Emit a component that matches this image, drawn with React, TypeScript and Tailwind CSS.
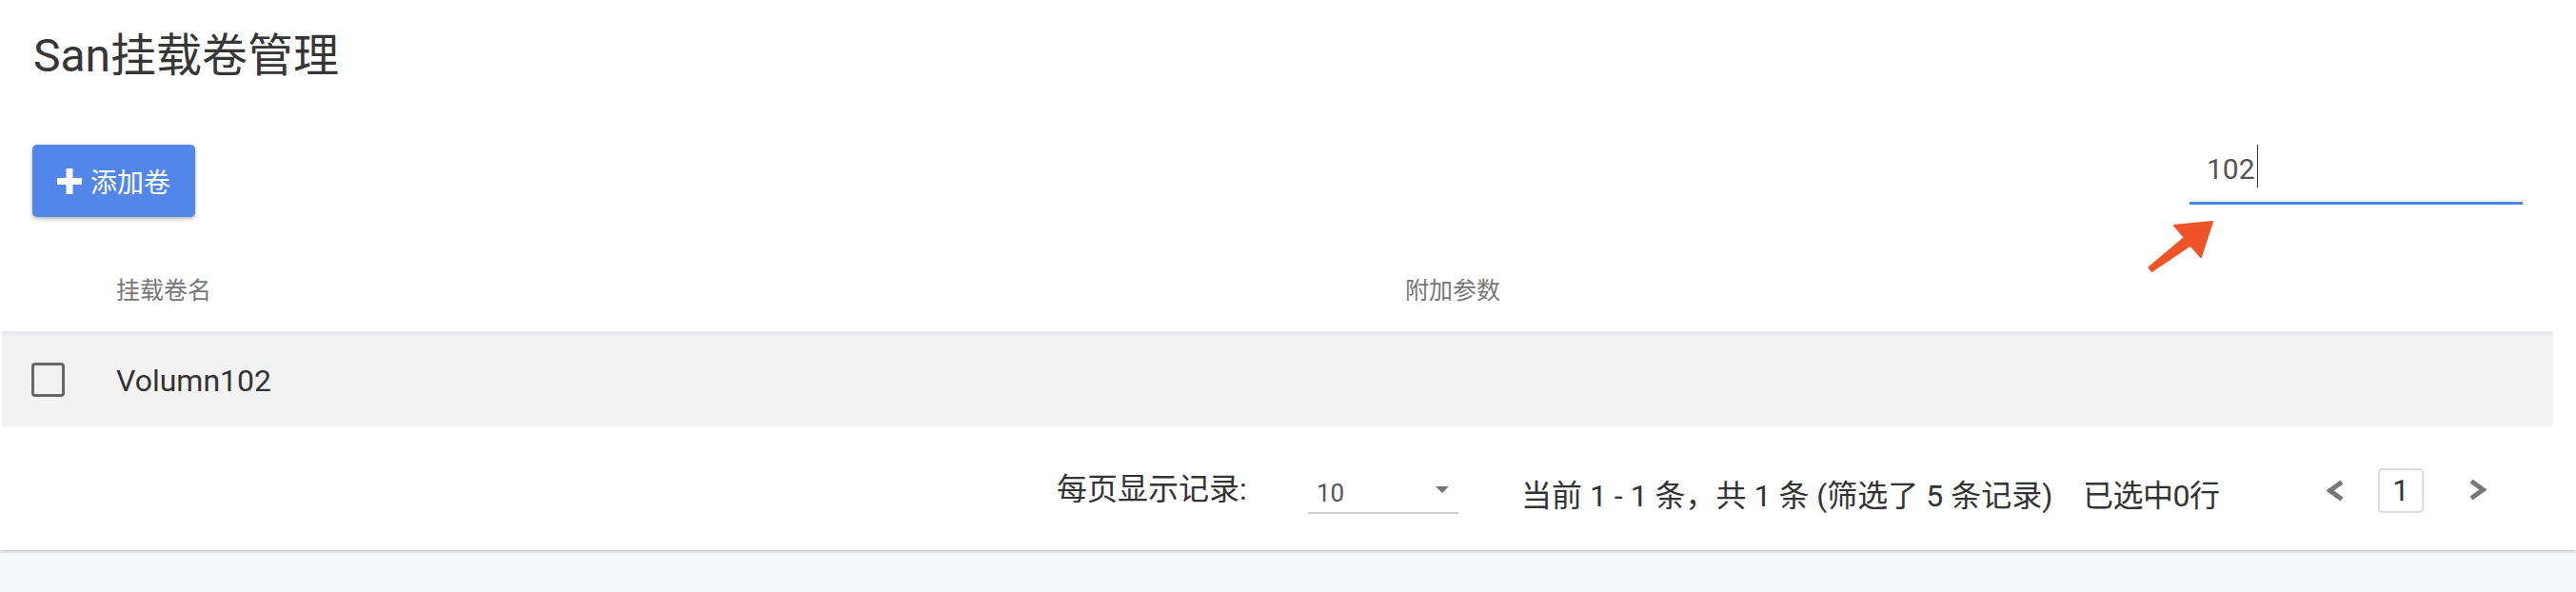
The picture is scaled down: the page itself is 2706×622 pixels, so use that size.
import React from "react";

function PlusIcon() {
  return (
    <svg width="26" height="27" viewBox="0 0 26 27" className="block">
      <rect x="9.5" y="0" width="7" height="27" fill="#fff" />
      <rect x="0" y="10" width="26" height="7" fill="#fff" />
    </svg>
  );
}

function Chevron({ dir }: { dir: "left" | "right" }) {
  const pts = dir === "left" ? "16,2.5 3.5,11.5 16,20.5" : "3,2.5 15.5,11.5 3,20.5";
  return (
    <svg width="19" height="23" viewBox="0 0 19 23" className="block">
      <polyline points={pts} fill="none" stroke="#777" strokeWidth="5" strokeLinejoin="miter" />
    </svg>
  );
}

function Arrow() {
  return (
    <svg
      width="80"
      height="65"
      viewBox="0 0 80 65"
      className="absolute left-[2250px] top-[225px]"
    >
      <polygon
        points="74,8 34,12 45,24.5 7.5,56 10.5,60 51,32.5 62,45"
        fill="#ee5428"
        stroke="#ee5428"
        strokeWidth="2"
        strokeLinejoin="round"
      />
    </svg>
  );
}

export default function App() {
  return (
    <div className="w-[2706px] h-[622px] bg-[#f7f8fa] font-[Roboto,'Noto_Sans_CJK_SC',sans-serif] overflow-hidden">
      <div className="relative bg-white h-[578px] shadow-[0_1px_4px_rgba(0,0,0,0.28)]">
        <h1 className="pt-[31px] pl-[35px] text-[48px] leading-[56px] text-[#363636] font-normal">
          San挂载卷管理
        </h1>

        <div className="flex justify-between mt-[65px] h-[76px]">
          <button className="ml-[34px] w-[171px] h-[76px] bg-[#5286e9] rounded-[5px] shadow-[0_2px_4px_rgba(0,0,0,0.3)] flex items-center pl-[26px] gap-[9px]">
            <PlusIcon />
            <span className="pt-[5px] text-[28px] leading-[33px] text-white">添加卷</span>
          </button>

          <div className="mr-[56px] w-[350px] h-[63px] border-b-[3px] border-[#5286e6] flex items-start pl-[18px]">
            <span className="mt-[8px] text-[30px] leading-[36px] text-[#555]">102</span>
            <span className="ml-[2px] w-px h-[45px] bg-[#333]" />
          </div>
        </div>

        <Arrow />

        <div className="ml-[2px] w-[2680px]">
          <div className="flex h-[120px] pt-[63px] text-[25px] leading-[30px] text-[#777]">
            <div className="w-[120px]" />
            <div className="w-[1354px]">挂载卷名</div>
            <div>附加参数</div>
          </div>

          <div className="flex items-center h-[100px] border-t-4 border-[#e9eaee] bg-[#f2f2f2]">
            <div className="w-[120px] flex">
              <div className="ml-[31px] -mt-[3px] w-[35px] h-[36px] border-[3px] border-[#666] rounded-[4px]" />
            </div>
            <div className="text-[32px] text-[#333]">Volumn102</div>
          </div>
        </div>

        <div className="flex justify-end items-start pr-[94px] h-[130px] text-[32px] leading-[38px] text-[#333] whitespace-nowrap">
          <div className="mt-[47px] w-[199px]">每页显示记录:</div>
          <div className="ml-[65px] mt-[55px] w-[158px] h-[37px] border-b-2 border-[#ccc] flex justify-between pl-[9px] pr-[10px]">
            <span className="text-[26px] leading-[30px] text-[#555]">10</span>
            <span className="mt-[8px] w-0 h-0 border-l-[7px] border-r-[7px] border-t-[7px] border-l-transparent border-r-transparent border-t-[#777]" />
          </div>
          <div className="ml-[66px] mt-[54px] w-[554px]">当前 1 - 1 条，共 1 条 (筛选了 5 条记录)</div>
          <div className="ml-[36px] mt-[54px] w-[144px] tracking-[-0.5px]">已选中0行</div>
          <div className="ml-[112px] mt-[56px]">
            <Chevron dir="left" />
          </div>
          <div className="ml-[35px] mt-[44px] w-[48px] h-[47px] border-2 border-[#ddd] rounded-[5px] flex items-center justify-center text-[31px] leading-[36px]">
            1
          </div>
          <div className="ml-[47px] mt-[55px]">
            <Chevron dir="right" />
          </div>
        </div>
      </div>
    </div>
  );
}
